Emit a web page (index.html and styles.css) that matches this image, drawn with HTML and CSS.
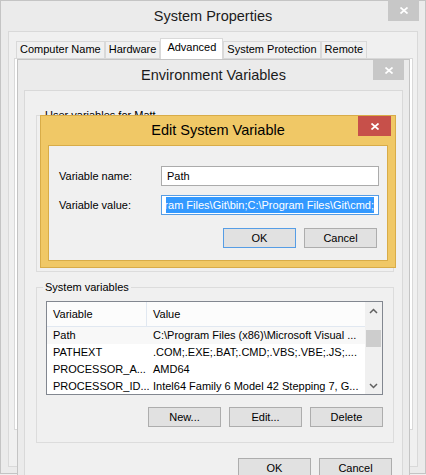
FILE: index.html
```html
<!DOCTYPE html>
<html lang="en">
<head>
    <meta charset="UTF-8">
    <title>Edit System Variable</title>
    <link rel="stylesheet" href="styles.css">
</head>
<body>

    <!-- back window -->
    <div class="window sp-window">
        <div class="titlebar">
            System Properties
            <span class="close">
                <svg width="8" height="7" viewBox="0 0 8 7"><path d="M0.5 0.5 7.5 6.5 M7.5 0.5 0.5 6.5" stroke="#fff" stroke-width="1.7"/></svg>
            </span>
        </div>
        <div class="client">
            <div class="tabs">
                <span class="tab">Computer Name</span>
                <span class="tab">Hardware</span>
                <span class="tab selected">Advanced</span>
                <span class="tab">System Protection</span>
                <span class="tab">Remote</span>
            </div>
            <div class="tab-page"></div>
        </div>
    </div>

    <div class="window env-window">
        <div class="titlebar">
            Environment Variables
            <span class="close">
                <svg width="8" height="7" viewBox="0 0 8 7"><path d="M0.5 0.5 7.5 6.5 M7.5 0.5 0.5 6.5" stroke="#fff" stroke-width="1.7"/></svg>
            </span>
        </div>
        <div class="client env-client">
            <!-- user list sits under the edit dialog -->
            <fieldset class="group user-group">
                <legend>User variables for Matt</legend>
                <div class="list user-list"></div>
            </fieldset>

            <fieldset class="group sys-group">
                <legend>System variables</legend>
                <div class="list">
                    <div class="list-view">
                        <div class="list-head"><span class="col-name">Variable</span><span class="col-value">Value</span></div>
                        <div class="list-row current"><span class="col-name">Path</span><span class="col-value">C:\Program Files (x86)\Microsoft Visual ...</span></div>
                        <div class="list-row"><span class="col-name">PATHEXT</span><span class="col-value">.COM;.EXE;.BAT;.CMD;.VBS;.VBE;.JS;....</span></div>
                        <div class="list-row"><span class="col-name">PROCESSOR_A...</span><span class="col-value">AMD64</span></div>
                        <div class="list-row"><span class="col-name">PROCESSOR_ID...</span><span class="col-value">Intel64 Family 6 Model 42 Stepping 7, G...</span></div>
                    </div>
                    <div class="scrollbar">
                        <span class="arrow">
                            <svg width="9" height="6" viewBox="0 0 9 6"><path d="M1 5 4.5 1.5 8 5" fill="none" stroke="#606060" stroke-width="1.5"/></svg>
                        </span>
                        <span class="thumb"></span>
                        <span class="arrow down">
                            <svg width="9" height="6" viewBox="0 0 9 6"><path d="M1 1 4.5 4.5 8 1" fill="none" stroke="#606060" stroke-width="1.5"/></svg>
                        </span>
                    </div>
                </div>
                <div class="btn-row">
                    <button class="btn">New...</button>
                    <button class="btn">Edit...</button>
                    <button class="btn">Delete</button>
                </div>
            </fieldset>

            <div class="btn-row dialog-buttons">
                <button class="btn">OK</button>
                <button class="btn">Cancel</button>
            </div>
        </div>
    </div>

    <!-- active dialog -->
    <div class="window edit-dialog">
        <div class="titlebar">
            Edit System Variable
            <span class="close">
                <svg width="8" height="7" viewBox="0 0 8 7"><path d="M0.5 0.5 7.5 6.5 M7.5 0.5 0.5 6.5" stroke="#fff" stroke-width="1.7"/></svg>
            </span>
        </div>
        <div class="client edit-client">
            <div class="field">
                <label>Variable name:</label>
                <div class="textbox">Path</div>
            </div>
            <div class="field">
                <label>Variable value:</label>
                <div class="textbox focused">
                    <div class="scroller">
                        <span class="selection">Program Files\Git\bin;C:\Program Files\Git\cmd;</span>
                    </div>
                </div>
            </div>
            <div class="btn-row">
                <button class="btn default">OK</button>
                <button class="btn">Cancel</button>
            </div>
        </div>
    </div>

</body>
</html>
```

FILE: styles.css
```css
* {
    box-sizing: border-box;
}

body {
    margin: 0;
    width: 426px;
    height: 475px;
    overflow: hidden;
    position: relative;
    background: #f0f0f0;
    font-family: "Liberation Sans", Arial, sans-serif;
    font-size: 11px;
    color: #000;
}

/* windows */
.window {
    position: absolute;
    display: flex;
    flex-direction: column;
    background: #ebebeb;
    border: 1px solid #c4c4c4;
}

.titlebar {
    position: relative;
    flex-shrink: 0;
    height: 30px;
    line-height: 30px;
    text-align: center;
    font-size: 14.5px;
    color: #1b1b1b;
}

.close {
    position: absolute;
    top: 0;
    right: 5px;
    width: 31px;
    height: 20px;
    display: flex;
    align-items: center;
    justify-content: center;
    background: #c7c7c7;
}

.client {
    flex: 1;
    background: #f0f0f0;
    border: 1px solid #d9d9d9;
}

/* System Properties */
.sp-window {
    left: 0;
    top: 0;
    width: 426px;
    height: 474px;
}

.sp-window .close {
    top: -1px;
    right: 6px;
    height: 21px;
}

.sp-window .client {
    margin: 0 7px 6px;
    padding: 6px 4px 0 5px;
}

.tabs {
    display: flex;
    align-items: flex-end;
    height: 20px;
    padding-left: 2px;
}

.tab {
    height: 17px;
    line-height: 15px;
    padding: 0 3px;
    background: #f0f0f0;
    border: 1px solid #d9d9d9;
    border-bottom: 0;
    white-space: nowrap;
}

.tab.selected {
    position: relative;
    z-index: 1;
    height: 21px;
    line-height: 17px;
    margin-bottom: -1px;
    padding: 0 6px;
    background: #fff;
}

.tab-page {
    height: 372px;
    background: #fff;
    border: 1px solid #d9d9d9;
}

/* Environment Variables */
.env-window {
    left: 17px;
    top: 59px;
    width: 393px;
    height: 440px;
}

.env-client {
    margin: 0 6px;
    padding: 18px 8px 0 11px;
}

.group {
    margin: 0;
    padding: 0;
    min-width: 0;
    border: 1px solid #dcdcdc;
}

.group legend {
    margin-left: 6px;
    padding: 0 2px;
    line-height: 13px;
}

.user-group {
    height: 163px;
}

.sys-group {
    margin-top: 9px;
}

.list {
    display: flex;
    height: 94px;
    margin: 7px 10px 0 9px;
    background: #fff;
    border: 1px solid #828790;
    overflow: hidden;
}

.user-list {
    height: 95px;
}

.list-view {
    flex: 1;
    min-width: 0;
}

.list-head,
.list-row {
    display: flex;
    white-space: nowrap;
}

.list-head {
    height: 25px;
    line-height: 24px;
    background: #fcfcfc;
    border-bottom: 1px solid #e1e8f1;
}

.list-head .col-name {
    border-right: 1px solid #e1e8f1;
}

.list-row {
    height: 17px;
    line-height: 17px;
}

.list-row.current {
    background: #f8f8f8;
}

.col-name {
    flex-shrink: 0;
    width: 100px;
    padding-left: 6px;
}

.col-value {
    flex: 1;
    padding-left: 6px;
    overflow: hidden;
}

.scrollbar {
    display: flex;
    flex-direction: column;
    width: 17px;
    background: #f0f0f0;
}

.arrow {
    display: flex;
    align-items: center;
    justify-content: center;
    height: 17px;
}

.arrow.down {
    margin-top: auto;
}

.thumb {
    height: 17px;
    margin: 11px 1px 0;
    background: #cdcdcd;
}

.btn-row {
    display: flex;
    justify-content: flex-end;
    gap: 8px;
    margin: 12px 10px 15px 0;
}

.btn {
    width: 73px;
    height: 20px;
    padding: 0;
    font: inherit;
    color: #000;
    background: #e1e1e1;
    border: 1px solid #adadad;
}

.btn.default {
    border-color: #569de5;
}

.dialog-buttons {
    margin: 15px 2px 0 0;
}

/* Edit System Variable */
.edit-dialog {
    left: 40px;
    top: 115px;
    width: 356px;
    height: 153px;
    background: #f0c866;
    border-color: #d8ac48;
}

.edit-dialog .titlebar {
    height: 29px;
    line-height: 29px;
    color: #000;
}

.edit-dialog .close {
    right: 4px;
    width: 33px;
    background: #c7504a;
}

.edit-client {
    margin: 0 7px 6px;
    padding: 20px 8px 12px 10px;
    border-color: #d8ac48;
}

.field {
    display: flex;
    align-items: center;
    height: 20px;
}

.field + .field {
    margin-top: 9px;
}

.field label {
    width: 102px;
}

.textbox {
    width: 218px;
    height: 20px;
    line-height: 18px;
    padding: 0 5px;
    background: #fff;
    border: 1px solid #ababab;
}

.textbox.focused {
    display: flex;
    padding: 1px 4px;
    border-color: #569de5;
}

.scroller {
    flex: 1;
    display: flex;
    justify-content: flex-end;
    overflow: hidden;
}

.selection {
    flex-shrink: 0;
    line-height: 16px;
    white-space: nowrap;
    color: #fff;
    background: #3399ff;
}

.edit-client .btn-row {
    margin: 13px 2px 0 0;
}
```
